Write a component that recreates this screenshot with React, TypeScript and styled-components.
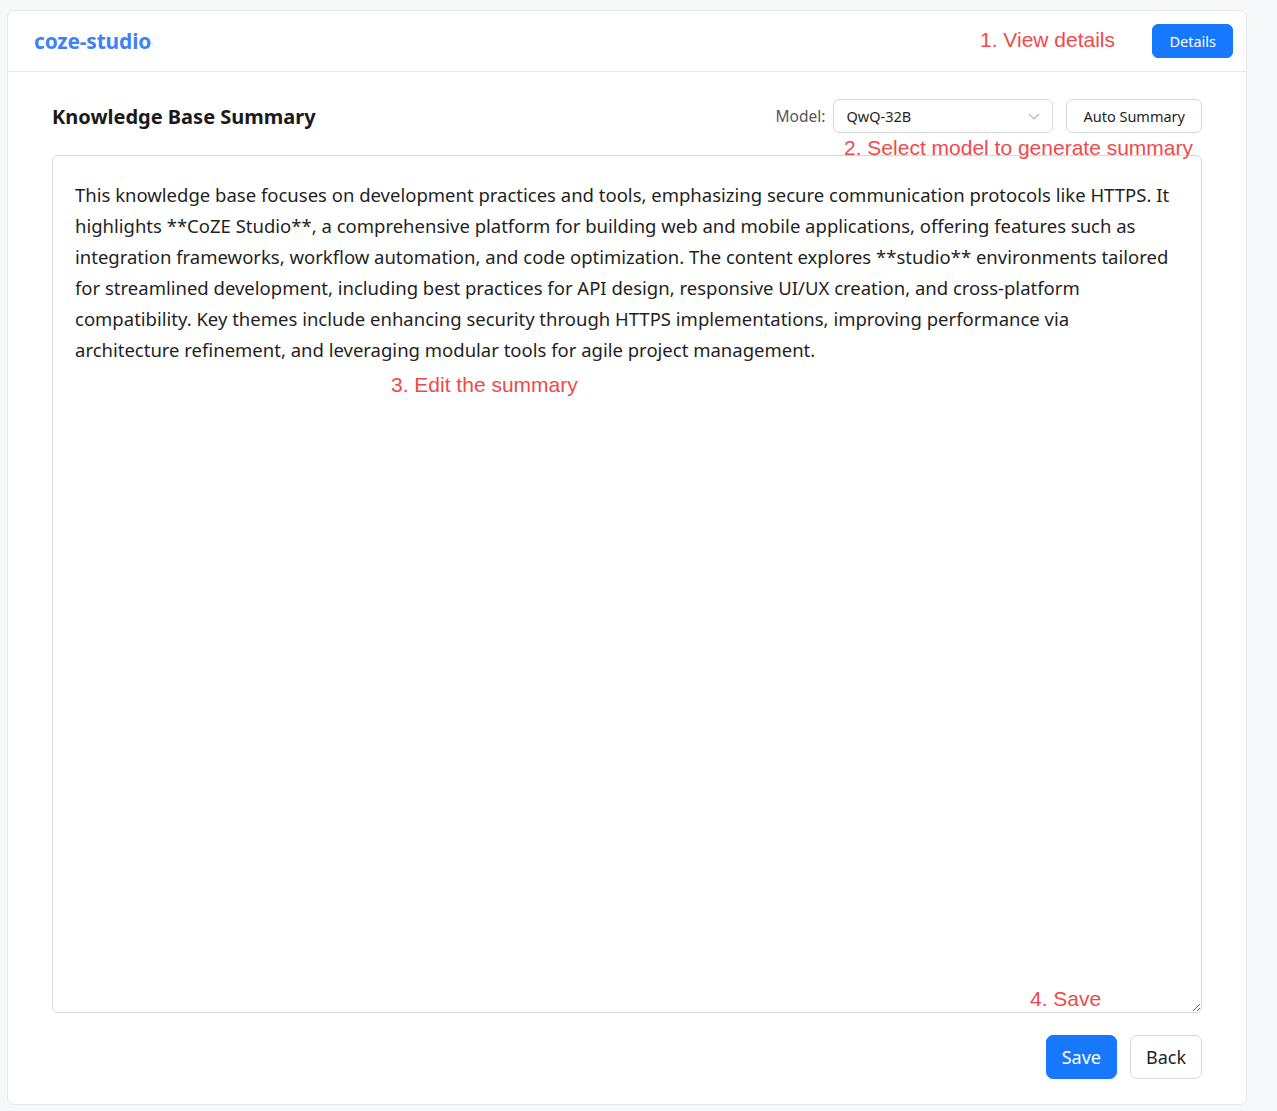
import React, { useState } from "react";
import styled, { createGlobalStyle } from "styled-components";

const SUMMARY =
  "This knowledge base focuses on development practices and tools, emphasizing secure communication protocols like HTTPS. It highlights **CoZE Studio**, a comprehensive platform for building web and mobile applications, offering features such as integration frameworks, workflow automation, and code optimization. The content explores **studio** environments tailored for streamlined development, including best practices for API design, responsive UI/UX creation, and cross-platform compatibility. Key themes include enhancing security through HTTPS implementations, improving performance via architecture refinement, and leveraging modular tools for agile project management.";

const GlobalStyle = createGlobalStyle`
  html, body {
    margin: 0;
    padding: 0;
    background: #f7f8fa;
    font-family: "Noto Sans", "Open Sans", sans-serif;
    color: #1f1f1f;
  }
`;

const Page = styled.div`
  padding: 10px 30px 6px 7px;
`;

const Card = styled.div`
  position: relative;
  width: 1240px;
  height: 1095px;
  box-sizing: border-box;
  background: #fff;
  border: 1px solid #e6e8ec;
  border-radius: 7px;
  display: flex;
  flex-direction: column;
`;

const Header = styled.header`
  height: 61px;
  box-sizing: border-box;
  border-bottom: 1px solid #e5e7eb;
  display: flex;
  align-items: center;
  justify-content: space-between;
  padding: 0 13px 1px 26px;
`;

const Logo = styled.div`
  font-size: 21px;
  font-weight: 700;
  color: #3f82f5;
  letter-spacing: -0.2px;
`;

const Button = styled.button<{ $primary?: boolean; $size?: "sm" | "lg" }>`
  box-sizing: border-box;
  font-family: inherit;
  cursor: pointer;
  border-radius: ${(p) => (p.$size === "lg" ? "7px" : "6px")};
  border: 1px solid ${(p) => (p.$primary ? "#1677ff" : "#d9d9d9")};
  background: ${(p) => (p.$primary ? "#1677ff" : "#fff")};
  color: ${(p) => (p.$primary ? "#fff" : "#1f1f1f")};
  font-size: ${(p) => (p.$size === "lg" ? "18px" : "14.5px")};
  height: ${(p) => (p.$size === "lg" ? "44px" : "34px")};
  padding: 0 ${(p) => (p.$size === "lg" ? "15px" : "16px")};
`;

const Body = styled.main`
  flex: 1;
  display: flex;
  flex-direction: column;
  padding: 27px 44px 25px 44px;
`;

const TitleRow = styled.div`
  display: flex;
  align-items: center;
  justify-content: space-between;
  height: 34px;
`;

const Title = styled.h2`
  margin: 0;
  font-size: 20px;
  font-weight: 700;
  color: #1a1a1a;
`;

const Controls = styled.div`
  display: flex;
  align-items: center;
  gap: 13px;
`;

const ModelLabel = styled.label`
  display: flex;
  align-items: center;
  gap: 8px;
  font-size: 15.5px;
  color: #555;
`;

const Select = styled.div`
  box-sizing: border-box;
  width: 220px;
  height: 34px;
  border: 1px solid #d9d9d9;
  border-radius: 6px;
  display: flex;
  align-items: center;
  justify-content: space-between;
  padding: 0 12px 0 12px;
  font-size: 14.5px;
  color: #1f1f1f;
`;

const Editor = styled.textarea`
  margin-top: 22px;
  flex: 1;
  box-sizing: border-box;
  width: 100%;
  border: 1px solid #d9d9d9;
  border-radius: 6px;
  padding: 23px 28px 22px 22px;
  font-family: "Noto Sans", "Open Sans", sans-serif;
  font-size: 18.5px;
  line-height: 31px;
  color: #1f1f1f;
  resize: vertical;
  outline: none;
`;

const Footer = styled.div`
  margin-top: 22px;
  display: flex;
  justify-content: flex-end;
  gap: 13px;
`;

const Note = styled.span<{ $x: number; $y: number }>`
  position: absolute;
  left: ${(p) => p.$x}px;
  top: ${(p) => p.$y}px;
  font-family: "Liberation Sans", Arial, sans-serif;
  font-size: 21px;
  color: #ef4a4a;
  white-space: nowrap;
  pointer-events: none;
`;

const Chevron = () => (
  <svg width="12" height="12" viewBox="0 0 12 12" fill="none">
    <path d="M1 4 L6 9 L11 4" stroke="#b5b5b5" strokeWidth="1.1" />
  </svg>
);

export default function App() {
  const [text, setText] = useState(SUMMARY);
  return (
    <Page>
      <GlobalStyle />
      <Card>
        <Header>
          <Logo>coze-studio</Logo>
          <Button $primary>Details</Button>
        </Header>
        <Body>
          <TitleRow>
            <Title>Knowledge Base Summary</Title>
            <Controls>
              <ModelLabel>
                Model:
                <Select>
                  QwQ-32B
                  <Chevron />
                </Select>
              </ModelLabel>
              <Button>Auto Summary</Button>
            </Controls>
          </TitleRow>
          <Editor value={text} onChange={(e) => setText(e.target.value)} />
          <Footer>
            <Button $primary $size="lg">
              Save
            </Button>
            <Button $size="lg">Back</Button>
          </Footer>
        </Body>
        <Note $x={972} $y={17}>1. View details</Note>
        <Note $x={836} $y={125}>2. Select model to generate summary</Note>
        <Note $x={383} $y={362}>3. Edit the summary</Note>
        <Note $x={1022} $y={976}>4. Save</Note>
      </Card>
    </Page>
  );
}
